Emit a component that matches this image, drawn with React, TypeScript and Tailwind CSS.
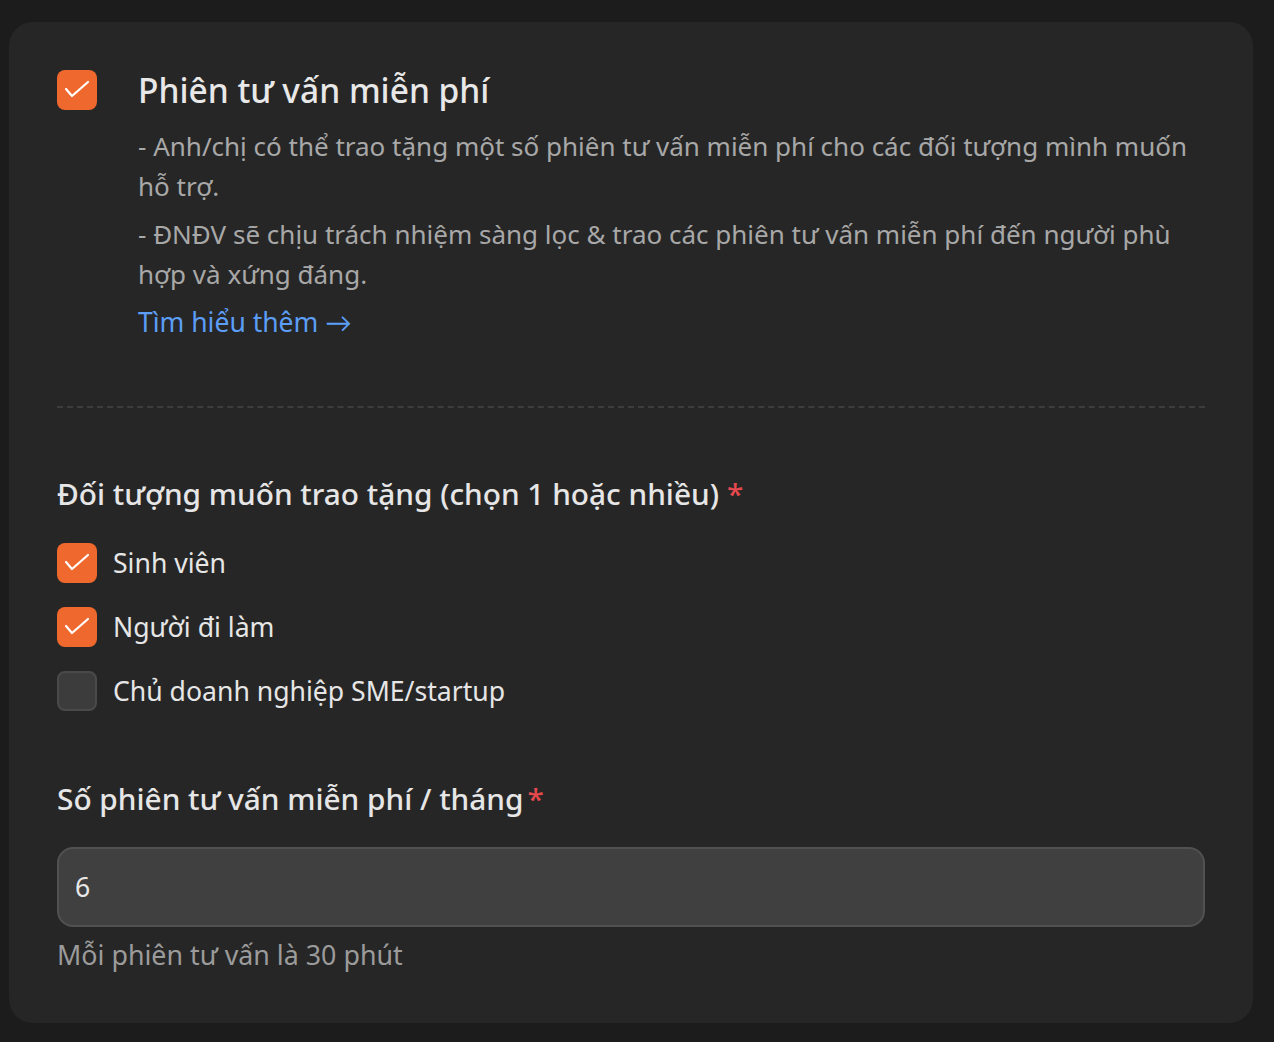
import { useState } from 'react'

const FONT = "font-['Noto_Sans','Lato',sans-serif]"

const AUDIENCES = [
  { id: 'student', label: 'Sinh viên' },
  { id: 'worker', label: 'Người đi làm' },
  { id: 'owner', label: 'Chủ doanh nghiệp SME/startup' },
]

function Check({ checked, onClick }: { checked: boolean; onClick?: () => void }) {
  return (
    <button
      type="button"
      onClick={onClick}
      className={`h-10 w-10 shrink-0 rounded-lg ${
        checked ? 'bg-[#ef682e]' : 'border-2 border-[#4a4a4a] bg-[#3c3c3c]'
      }`}
    >
      {checked && (
        <svg viewBox="0 0 40 40" className="h-10 w-10" fill="none" stroke="white" strokeWidth="2.2" strokeLinecap="round" strokeLinejoin="round">
          <polyline points="9,19 15,26 31,12" />
        </svg>
      )}
    </button>
  )
}

export default function App() {
  const [enabled, setEnabled] = useState(true)
  const [selected, setSelected] = useState<string[]>(['student', 'worker'])
  const [count, setCount] = useState('6')

  const toggle = (id: string) =>
    setSelected((s) => (s.includes(id) ? s.filter((x) => x !== id) : [...s, id]))

  return (
    <div className={`min-h-screen bg-[#1c1c1c] pl-[9px] pr-[21px] pt-[22px] pb-[19px] ${FONT}`}>
      <div className="rounded-3xl bg-[#262626] px-12 pt-12 pb-[50px]">
        {/* Header */}
        <div className="flex gap-[41px]">
          <Check checked={enabled} onClick={() => setEnabled(!enabled)} />
          <div>
            <h2 className="text-[33.5px] font-medium leading-10 text-[#e8e8e8]">Phiên tư vấn miễn phí</h2>
            <div className="mt-4 space-y-2 text-[26px] leading-10 text-[#a8a8a8]">
              <p>- Anh/chị có thể trao tặng một số phiên tư vấn miễn phí cho các đối tượng mình muốn hỗ trợ.</p>
              <p>- ĐNĐV sẽ chịu trách nhiệm sàng lọc &amp; trao các phiên tư vấn miễn phí đến người phù hợp và xứng đáng.</p>
            </div>
            <a href="#" className="mt-2 block text-[26.5px] leading-10 text-[#5c9ef5]">
              Tìm hiểu thêm →
            </a>
          </div>
        </div>

        <div className="mt-[64px] border-t-2 border-dashed border-[#3d3d3d]" />

        {/* Audience */}
        <div className="mt-[66px]">
          <div className="text-[29.8px] font-medium leading-10 text-[#e6e6e6]">
            Đối tượng muốn trao tặng (chọn 1 hoặc nhiều)
            <span className="ml-2 text-[#e5484d]">*</span>
          </div>
          <div className="mt-[29px] flex flex-col gap-6">
            {AUDIENCES.map((a) => (
              <label key={a.id} className="flex items-center gap-4 text-[26.6px] leading-10 text-[#e6e6e6]">
                <Check checked={selected.includes(a.id)} onClick={() => toggle(a.id)} />
                {a.label}
              </label>
            ))}
          </div>
        </div>

        {/* Count */}
        <div className="mt-[68px]">
          <div className="text-[29.8px] font-medium leading-10 text-[#e6e6e6]">
            Số phiên tư vấn miễn phí / tháng
            <span className="ml-1 text-[#e5484d]">*</span>
          </div>
          <input
            value={count}
            onChange={(e) => setCount(e.target.value)}
            className="mt-7 h-[80px] w-full rounded-2xl border-2 border-[#515151] bg-[#404040] px-4 text-[26.6px] text-[#e8e8e8] outline-none"
          />
          <p className="mt-[10px] text-[26.8px] leading-9 text-[#9b9b9b]">Mỗi phiên tư vấn là 30 phút</p>
        </div>
      </div>
    </div>
  )
}
